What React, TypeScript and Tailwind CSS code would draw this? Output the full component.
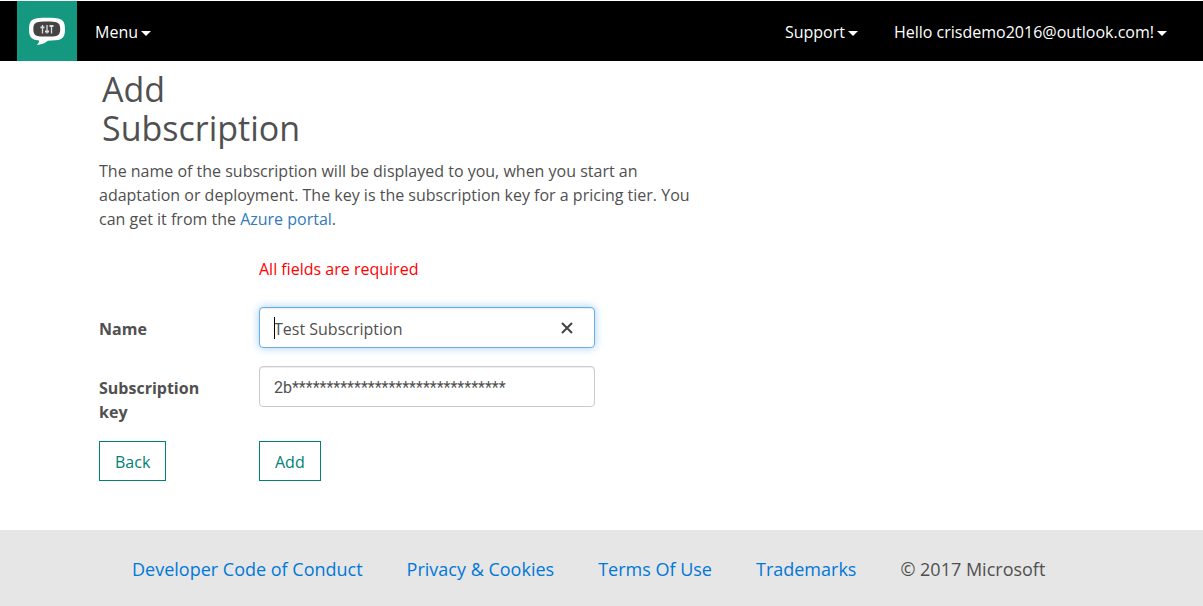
import { useRef, useState } from "react";

function Caret() {
  return (
    <svg className="mt-0.5 h-[5px] w-[10px]" viewBox="0 0 10 5" aria-hidden="true">
      <path d="M0 0h10L5 5z" fill="currentColor" />
    </svg>
  );
}

function NavButton({ label }: { label: string }) {
  return (
    <button type="button" aria-haspopup="menu" className="flex items-center gap-[3px] whitespace-nowrap text-white">
      {label}
      <Caret />
    </button>
  );
}

function Logo() {
  return (
    <a href="#home" aria-label="Home" className="flex size-[60px] items-center justify-center bg-[#149980]">
      <svg className="size-[60px]" viewBox="0 0 60 60" aria-hidden="true">
        <path
          d="M30 16.5c-6 0-10.5.3-13.5 1.5-3.500 1.600-4.500 5-4.500 10s1 8.400 4.500 10c1.500.700 3.500 1 5.700 1.200-.200 1.900-.900 3.300-2.400 4.500 4.400-.300 8.300-1.700 11-4.300 5.500 0 9.700-.300 12.700-1.400 3.500-1.600 4.500-5 4.500-10s-1-8.400-4.500-10c-3-1.200-7.500-1.500-13.500-1.500z"
          transform="translate(0 .3)"
          fill="#fff"
        />
        <path
          d="M30 20.500c-5 0-8 .1-10.500.9-2.400.9-3.200 3-3.200 6.600s.8 5.800 3.200 6.700c2.500.8 5.500.9 10.500.9s7.500-.1 10-.9c2.400-.9 3.200-3.100 3.200-6.700s-.8-5.700-3.200-6.600c-2.500-.8-5-.9-10-.9z"
          fill="#444"
        />
        <g stroke="#dcdcdc" strokeWidth="1.300">
          <path d="M25.500 24v8.500M30 24v8.500M34.500 24v8.500" />
          <path d="M23.500 26.300h4M28 30.500h4M32.500 25h4" strokeWidth="1.800" />
        </g>
      </svg>
    </a>
  );
}

const footerLinks = ["Developer Code of Conduct", "Privacy & Cookies", "Terms Of Use", "Trademarks"];

const fieldClass = "h-[41px] w-full rounded border bg-white px-3.5 pt-0.5 text-base text-[#505050] outline-none";
const buttonClass = "h-10 border border-[#008272] bg-white px-[15px] pt-0.5 text-[#008272]";

export default function App() {
  const [name, setName] = useState("Test Subscription");
  const [key, setKey] = useState("2b*******************************");
  const nameRef = useRef<HTMLInputElement>(null);

  return (
    <div className="flex min-h-screen flex-col bg-white pt-px font-['Open_Sans','Noto_Sans',sans-serif] text-base leading-6 text-[#505050]">
      <header className="flex h-[60px] items-center bg-black pl-[17px] pr-9">
        <Logo />
        <nav className="flex flex-1 items-center pl-[18px] pt-0.5">
          <NavButton label="Menu" />
          <div className="ml-auto flex gap-9">
            <NavButton label="Support" />
            <NavButton label="Hello crisdemo2016@outlook.com!" />
          </div>
        </nav>
      </header>

      <main className="flex-1 px-[99px] pb-[49px] pt-[9px]">
        <h1 className="w-[210px] pl-[3px] text-[34px] leading-[39px]">Add Subscription</h1>
        <p className="mt-[11px] max-w-[600px]">
          The name of the subscription will be displayed to you, when you start an adaptation or deployment. The key is
          the subscription key for a pricing tier. You can get it from the{" "}
          <a href="#azure-portal" className="text-[#337ab7]">
            Azure portal
          </a>
          .
        </p>

        <form
          className="mt-[26px] grid max-w-[496px] grid-cols-[160px_1fr]"
          onSubmit={(event) => event.preventDefault()}
        >
          <p className="col-start-2 mb-[26px] text-[#f00]">All fields are required</p>

          <label htmlFor="name" className="pt-2.5 font-bold">
            Name
          </label>
          <div className="relative mb-[18px]">
            <input
              id="name"
              ref={nameRef}
              value={name}
              onChange={(event) => setName(event.target.value)}
              className={`${fieldClass} border-[#66afe9] pr-12 shadow-[inset_0_1px_1px_rgba(0,0,0,0.075),0_0_8px_rgba(102,175,233,0.6)]`}
            />
            <span className="absolute left-[15px] top-2.5 h-[22px] w-px bg-black" />
            <button
              type="button"
              aria-label="Clear name"
              className="absolute right-5 top-[13px] flex size-4 items-center justify-center"
              onClick={() => {
                setName("");
                nameRef.current?.focus();
              }}
            >
              <svg className="size-3" viewBox="0 0 12 12" aria-hidden="true">
                <path d="M1 1l10 10M11 1L1 11" stroke="#444" strokeWidth="2" />
              </svg>
            </button>
          </div>

          <label htmlFor="key" className="w-28 pt-2.5 font-bold">
            Subscription key
          </label>
          <div>
            <input
              id="key"
              value={key}
              onChange={(event) => setKey(event.target.value)}
              className={`${fieldClass} border-[#ccc] font-[Roboto,sans-serif] shadow-[inset_0_1px_1px_rgba(0,0,0,0.075)]`}
            />
          </div>

          <div className="mt-[17px]">
            <button type="button" className={buttonClass}>
              Back
            </button>
          </div>
          <div className="mt-[17px]">
            <button type="submit" className={buttonClass}>
              Add
            </button>
          </div>
        </form>
      </main>

      <footer className="flex h-[76px] flex-wrap items-center gap-x-11 bg-[#e6e6e6] px-[132px] pt-0.5 text-[18px]">
        {footerLinks.map((label) => (
          <a key={label} href="#legal" className="text-[#0078d7]">
            {label}
          </a>
        ))}
        <span>© 2017 Microsoft</span>
      </footer>
    </div>
  );
}
